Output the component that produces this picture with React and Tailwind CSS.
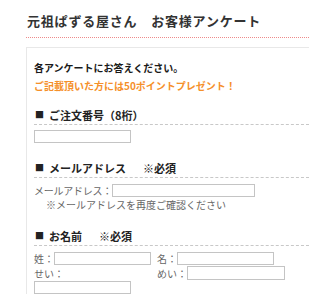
import React from 'react';

const font = { fontFamily: '"Noto Sans CJK JP", "Noto Sans", sans-serif' };

function TextBox({ className = '' }) {
  return <div className={`h-[13px] border border-[#c4c4c4] bg-white ${className}`} />;
}

function Heading({ children, note, className = '' }) {
  return (
    <div className={`flex h-[17px] items-start border-b border-dashed border-[#c8c8c8] text-[11px] leading-[14px] font-bold text-[#222] ${className}`}>
      <span className="mr-[5px] ml-[1px] text-[9px]">■</span>
      <span>{children}</span>
      {note && <span className="ml-[17px]">{note}</span>}
    </div>
  );
}

export default function App() {
  return (
    <div className="h-[300px] w-[309px] overflow-hidden bg-white pl-[26px]" style={font}>
      <div className="border-b border-dotted border-[#ee8a8a] pt-[11px] pb-[6px] pl-[1px]">
        <h1 className="text-[13px] leading-[20px] font-bold tracking-[0.8px] text-[#333]">
          元祖ぱずる屋さん　お客様アンケート
        </h1>
      </div>

      <div className="mt-[9px] border-t border-l border-[#e8e8e8] pt-[13px] pl-[7px]">
        <p className="text-[10px] leading-[14px] font-bold text-[#1a1a1a]">各アンケートにお答えください。</p>
        <p className="mt-[4px] text-[10px] leading-[14px] font-bold text-[#f5902a]">
          ご記載頂いた方には50ポイントプレゼント！
        </p>

        <Heading className="mt-[15px]">ご注文番号（8桁）</Heading>
        <TextBox className="mt-[5px] w-[97px]" />

        <Heading className="mt-[18px]" note="※必須">メールアドレス</Heading>
        <div className="mt-[6px] flex items-center text-[10px] leading-[13px] text-[#666]">
          <span className="tracking-[-0.25px]">メールアドレス：</span>
          <TextBox className="w-[143px]" />
        </div>
        <p className="mt-[1px] pl-[12px] text-[10px] leading-[14px] text-[#666]">※メールアドレスを再度ご確認ください</p>

        <Heading className="mt-[17px]" note="※必須">お名前</Heading>
        <div className="mt-[6px] grid grid-cols-[123px_1fr] gap-y-[1px] text-[10px] leading-[13px] text-[#666]">
          <div className="flex items-center">
            <span>姓：</span>
            <TextBox className="w-[97px]" />
          </div>
          <div className="flex items-center">
            <span>名：</span>
            <TextBox className="w-[97px]" />
          </div>
          <div>
            <span className="block pt-[1px]">せい：</span>
            <TextBox className="mt-[1px] w-[97px]" />
          </div>
          <div className="flex items-start">
            <span className="pt-[1px]">めい：</span>
            <TextBox className="h-[14px] w-[98px]" />
          </div>
        </div>
      </div>
    </div>
  );
}
